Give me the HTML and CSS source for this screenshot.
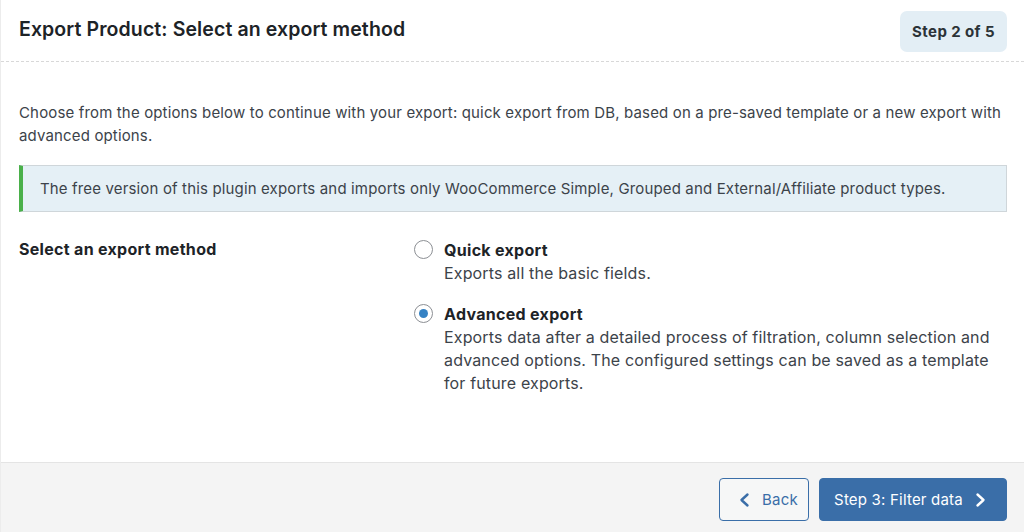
FILE: index.html
```html
<!DOCTYPE html>
<html lang="en">
<head>
<meta charset="utf-8">
<title>Export Product</title>
<link rel="stylesheet" href="styles.css">
</head>
<body>
<div class="card">
  <header class="header">
    <h1 class="title">Export Product: Select an export method</h1>
    <div class="step-badge">Step 2 of 5</div>
  </header>
  <main class="content">
    <p class="intro">Choose from the options below to continue with your export: quick export from DB, based on a pre-saved template or a new export with advanced options.</p>
    <div class="notice">The free version of this plugin exports and imports only WooCommerce Simple, Grouped and External/Affiliate product types.</div>
    <div class="method-row">
      <div class="method-label">Select an export method</div>
      <div class="options">
        <label class="option">
          <span class="radio"></span>
          <span class="option-text">
            <span class="option-title">Quick export</span>
            <span class="option-desc">Exports all the basic fields.</span>
          </span>
        </label>
        <label class="option">
          <span class="radio checked"></span>
          <span class="option-text">
            <span class="option-title">Advanced export</span>
            <span class="option-desc">Exports data after a detailed process of filtration, column selection and advanced options. The configured settings can be saved as a template for future exports.</span>
          </span>
        </label>
      </div>
    </div>
  </main>
  <footer class="footer">
    <button class="btn btn-back" type="button">
      <svg class="chev" width="12" height="16" viewBox="0 0 12 16"><polyline points="8.5,2.5 2.5,8 8.5,13.5" fill="none" stroke="currentColor" stroke-width="2.4" stroke-linecap="round" stroke-linejoin="round"/></svg>
      <span>Back</span>
    </button>
    <button class="btn btn-next" type="button">
      <span>Step 3: Filter data</span>
      <svg class="chev" width="12" height="16" viewBox="0 0 12 16"><polyline points="3.5,2.5 9.5,8 3.5,13.5" fill="none" stroke="currentColor" stroke-width="2.4" stroke-linecap="round" stroke-linejoin="round"/></svg>
    </button>
  </footer>
</div>
</body>
</html>
```

FILE: styles.css
```css
* { box-sizing: border-box; }
html, body { margin: 0; padding: 0; }
body {
  font-family: Inter, "Noto Sans", "Liberation Sans", sans-serif;
  color: #3c434a;
  background: #fff;
  letter-spacing: 0.15px;
}
.card {
  width: 1024px;
  height: 532px;
  display: flex;
  flex-direction: column;
  border-left: 1px solid #ececec;
  background: #fff;
}
.header {
  height: 62px;
  flex: 0 0 auto;
  display: flex;
  align-items: center;
  justify-content: space-between;
  padding: 0 17px 0 18px;
  border-bottom: 1px dashed #d8d8d8;
}
.title {
  margin: 0;
  font-size: 19.5px;
  font-weight: 600;
  color: #1d2327;
  letter-spacing: 0.1px;
  position: relative;
  top: -2px;
}
.step-badge {
  height: 41px;
  width: 107px;
  display: flex;
  align-items: center;
  justify-content: center;
  background: #e3eef5;
  border-radius: 7px;
  font-size: 15px;
  font-weight: 700;
  letter-spacing: 0.4px;
  color: #2c3338;
  position: relative;
  top: 1px;
}
.content {
  flex: 1 1 auto;
  padding: 39px 17px 0 18px;
}
.intro {
  margin: 0;
  font-size: 15px;
  line-height: 23px;
}
.notice {
  margin-top: 18px;
  height: 47px;
  display: flex;
  align-items: center;
  padding-left: 17px;
  background: #e5f0f6;
  border: 1px solid #cfd6da;
  border-left: 4px solid #4ab04a;
  font-size: 15px;
  color: #3c434a;
}
.method-row {
  margin-top: 26px;
  display: flex;
}
.method-label {
  width: 395px;
  font-size: 16px;
  font-weight: 700;
  letter-spacing: 0.3px;
  line-height: 23px;
  color: #1d2327;
}
.options {
  display: flex;
  flex-direction: column;
  gap: 18px;
  flex: 1;
  padding-top: 1px;
}
.option {
  display: flex;
  gap: 11px;
  font-size: 16px;
  line-height: 23px;
}
.radio {
  flex: 0 0 auto;
  width: 19px;
  height: 19px;
  margin-top: 1px;
  border: 1.5px solid #8c8f94;
  border-radius: 50%;
  background: #fff;
  position: relative;
}
.radio.checked::after {
  content: "";
  position: absolute;
  left: 3.5px;
  top: 3.5px;
  width: 9px;
  height: 9px;
  border-radius: 50%;
  background: #3582c4;
}
.option-text {
  display: flex;
  flex-direction: column;
}
.option-title {
  font-weight: 700;
  letter-spacing: 0.3px;
  color: #1d2327;
}
.option-desc {
  color: #3c434a;
}
.footer {
  flex: 0 0 70px;
  display: flex;
  justify-content: flex-end;
  align-items: flex-start;
  gap: 10px;
  padding: 15px 17px 0 0;
  background: #f4f4f4;
  border-top: 1px solid #e4e4e4;
}
.btn {
  height: 43px;
  display: flex;
  align-items: center;
  gap: 11px;
  font-family: inherit;
  font-size: 15px;
  letter-spacing: 0.2px;
  border-radius: 4px;
  cursor: pointer;
}
.btn-back {
  width: 90px;
  justify-content: center;
  background: #f6f7f7;
  border: 1px solid #3a6ea8;
  color: #3a6ea8;
  padding: 0 0 0 9px;
}
.btn-next {
  width: 188px;
  justify-content: center;
  background: #3a6ea8;
  border: 1px solid #3a6ea8;
  color: #fff;
  padding: 0 6px 0 0;
}
.chev { display: block; }
```
